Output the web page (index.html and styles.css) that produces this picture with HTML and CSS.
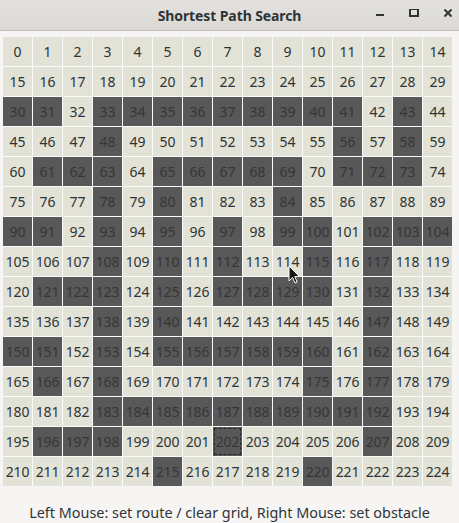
FILE: index.html
```html
<!DOCTYPE html>
<html>
<head>
<meta charset="utf-8">
<link rel="stylesheet" href="styles.css">
</head>
<body>
<div class="window">
  <header class="titlebar">
    <span class="title">Shortest Path Search</span>
    <div class="controls">
      <svg class="btn" width="10" height="10" viewBox="0 0 10 10"><rect x="1" y="5" width="8" height="2" fill="#2e3436"/></svg>
      <svg class="btn" width="10" height="10" viewBox="0 0 10 10"><rect x="1" y="0" width="8" height="7" fill="none" stroke="#2e3436" stroke-width="2"/></svg>
      <svg class="btn" width="10" height="10" viewBox="0 0 10 10"><path d="M1.5 0.5 L8.5 7.5 M8.5 0.5 L1.5 7.5" stroke="#2e3436" stroke-width="2"/></svg>
    </div>
  </header>
  <main class="content">
    <div class="grid">
      <span>0</span><span>1</span><span>2</span><span>3</span><span>4</span><span>5</span><span>6</span><span>7</span><span>8</span><span>9</span><span>10</span><span>11</span><span>12</span><span>13</span><span>14</span>
      <span>15</span><span>16</span><span>17</span><span>18</span><span>19</span><span>20</span><span>21</span><span>22</span><span>23</span><span>24</span><span>25</span><span>26</span><span>27</span><span>28</span><span>29</span>
      <span class="ob">30</span><span class="ob">31</span><span>32</span><span class="ob">33</span><span class="ob">34</span><span class="ob">35</span><span class="ob">36</span><span class="ob">37</span><span class="ob">38</span><span class="ob">39</span><span class="ob">40</span><span class="ob">41</span><span>42</span><span class="ob">43</span><span>44</span>
      <span>45</span><span>46</span><span>47</span><span class="ob">48</span><span>49</span><span>50</span><span>51</span><span>52</span><span>53</span><span>54</span><span>55</span><span class="ob">56</span><span>57</span><span class="ob">58</span><span>59</span>
      <span>60</span><span class="ob">61</span><span class="ob">62</span><span class="ob">63</span><span>64</span><span class="ob">65</span><span class="ob">66</span><span class="ob">67</span><span class="ob">68</span><span class="ob">69</span><span>70</span><span class="ob">71</span><span class="ob">72</span><span class="ob">73</span><span>74</span>
      <span>75</span><span>76</span><span>77</span><span class="ob">78</span><span>79</span><span class="ob">80</span><span>81</span><span>82</span><span>83</span><span class="ob">84</span><span>85</span><span>86</span><span>87</span><span>88</span><span>89</span>
      <span class="ob">90</span><span class="ob">91</span><span>92</span><span class="ob">93</span><span>94</span><span class="ob">95</span><span>96</span><span class="ob">97</span><span>98</span><span class="ob">99</span><span class="ob">100</span><span>101</span><span class="ob">102</span><span class="ob">103</span><span class="ob">104</span>
      <span>105</span><span>106</span><span>107</span><span class="ob">108</span><span>109</span><span class="ob">110</span><span>111</span><span class="ob">112</span><span>113</span><span>114</span><span class="ob">115</span><span>116</span><span class="ob">117</span><span>118</span><span>119</span>
      <span>120</span><span class="ob">121</span><span class="ob">122</span><span class="ob">123</span><span>124</span><span class="ob">125</span><span>126</span><span class="ob">127</span><span class="ob">128</span><span class="ob">129</span><span class="ob">130</span><span>131</span><span class="ob">132</span><span>133</span><span>134</span>
      <span>135</span><span>136</span><span>137</span><span class="ob">138</span><span>139</span><span class="ob">140</span><span>141</span><span>142</span><span>143</span><span>144</span><span>145</span><span>146</span><span class="ob">147</span><span>148</span><span>149</span>
      <span class="ob">150</span><span class="ob">151</span><span>152</span><span class="ob">153</span><span>154</span><span class="ob">155</span><span class="ob">156</span><span class="ob">157</span><span class="ob">158</span><span class="ob">159</span><span class="ob">160</span><span>161</span><span class="ob">162</span><span>163</span><span>164</span>
      <span>165</span><span class="ob">166</span><span>167</span><span class="ob">168</span><span>169</span><span>170</span><span>171</span><span>172</span><span>173</span><span>174</span><span class="ob">175</span><span>176</span><span class="ob">177</span><span>178</span><span>179</span>
      <span>180</span><span>181</span><span>182</span><span class="ob">183</span><span class="ob">184</span><span class="ob">185</span><span class="ob">186</span><span class="ob">187</span><span class="ob">188</span><span class="ob">189</span><span class="ob">190</span><span class="ob">191</span><span class="ob">192</span><span>193</span><span>194</span>
      <span>195</span><span class="ob">196</span><span class="ob">197</span><span class="ob">198</span><span>199</span><span>200</span><span>201</span><span class="ob focus">202</span><span>203</span><span>204</span><span>205</span><span>206</span><span class="ob">207</span><span>208</span><span>209</span>
      <span>210</span><span>211</span><span>212</span><span>213</span><span>214</span><span class="ob">215</span><span>216</span><span>217</span><span>218</span><span>219</span><span class="ob">220</span><span>221</span><span>222</span><span>223</span><span>224</span>
    </div>
    <p class="hint">Left Mouse: set route / clear grid, Right Mouse: set obstacle</p>
  </main>
  <svg class="cursor" width="14" height="20" viewBox="0 0 14 20"><path d="M1 1 L1 16 L4.5 12.5 L7 18 L9.2 17 L6.8 11.6 L11.5 11.6 Z" fill="#1a1a1a" stroke="#ffffff" stroke-width="1"/></svg>
</div>
</body>
</html>
```
FILE: styles.css
```css
html, body {
  margin: 0;
  padding: 0;
  background: #f6f5f4;
}
.window {
  position: relative;
  width: 459px;
  height: 523px;
  font-family: "Noto Sans", "Open Sans", sans-serif;
  color: #2e3436;
}
.titlebar {
  position: relative;
  height: 30px;
  border-bottom: 1px solid #c2bdb8;
  background: linear-gradient(#e3e1de, #dcd9d5);
  display: flex;
  align-items: center;
  justify-content: center;
}
.title {
  font-weight: bold;
  font-size: 14px;
  color: #2e3436;
  letter-spacing: -0.1px;
}
.controls {
  position: absolute;
  right: 6px;
  top: 9px;
  display: flex;
  gap: 24px;
}
.btn {
  display: block;
}
.content {
  padding: 6px 0 0 3px;
}
.grid {
  display: grid;
  grid-template-columns: repeat(15, 29px);
  grid-auto-rows: 29px;
  gap: 1px;
  width: 449px;
  background: #fbfbfa;
}
.grid span {
  display: flex;
  align-items: center;
  justify-content: center;
  background: #e3e2d7;
  color: #2e3436;
  font-size: 14px;
  letter-spacing: -0.1px;
}
.grid span.ob {
  background: #585858;
  color: #363636;
}
.grid span.focus {
  outline: 1px dashed #2a2a2a;
  outline-offset: -2px;
}
.hint {
  margin: 17px 0 0 -3px;
  text-align: center;
  font-size: 14.4px;
  color: #2e3436;
}
.cursor {
  position: absolute;
  left: 288px;
  top: 265px;
}
```
